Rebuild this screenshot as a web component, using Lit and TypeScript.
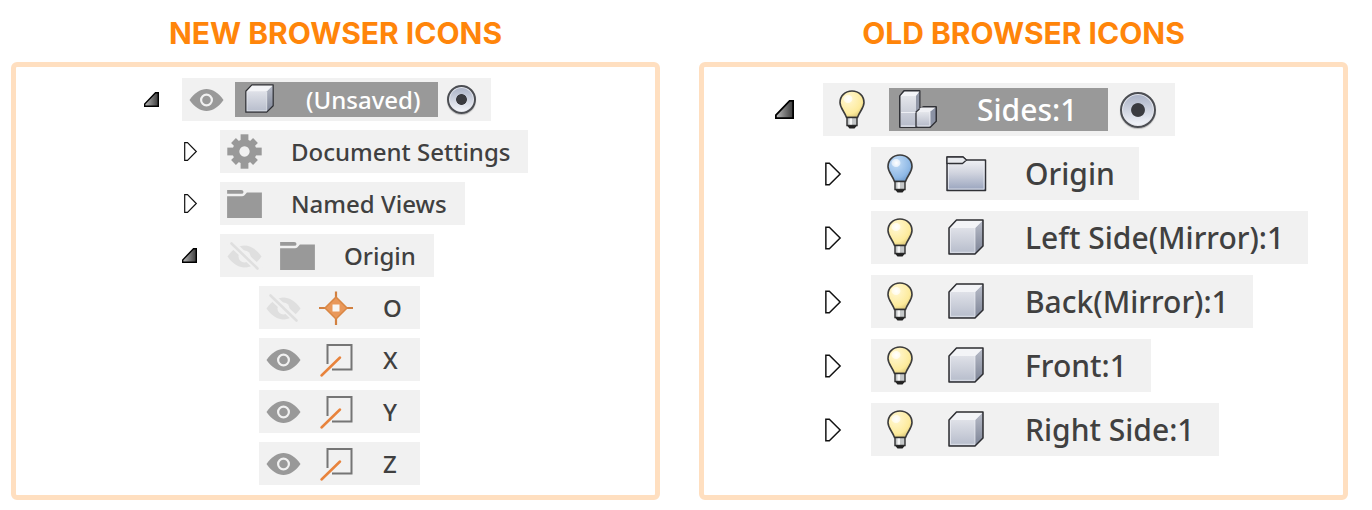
import { LitElement, html, svg, css, nothing, type TemplateResult } from "lit";
import { customElement, property } from "lit/decorators.js";
import { classMap } from "lit/directives/class-map.js";

type Shape = "cube" | "gear" | "folder" | "point" | "plane" | "parts" | "tabFolder";
type Lamp = "eye" | "eyeOff" | "bulbOn" | "bulbOff";

interface TreeNode {
  label: string;
  shape: Shape;
  lamp?: Lamp;
  open?: boolean;
  selected?: boolean;
  children?: TreeNode[];
  leaf?: boolean;
}

const gearTeeth = [0, 45, 90, 135, 180, 225, 270, 315];

const cube = svg`
  <linearGradient id="face" x1="0" y1="0" x2="0" y2="1"><stop offset="0" stop-color="#dfe1e8"/><stop offset="1" stop-color="#b6bccb"/></linearGradient>
  <linearGradient id="side" x1="0" y1="0" x2="0" y2="1"><stop offset="0" stop-color="#b9bdc9"/><stop offset="1" stop-color="#7d8496"/></linearGradient>
  <path d="M1 9 8.500 1H35V27L27 35H1Z" fill="#f3f4f7"/>
  <path d="M1 9H27V35H1Z" fill="url(#face)"/>
  <path d="M27 9 35 1V27L27 35Z" fill="url(#side)"/>
  <path d="M2.500 33.500V9.500M2.500 33.300H26.500M27 34V9L34 2" fill="none" stroke="#eef0f5" stroke-width="1" opacity=".7"/>
  <path d="M1 9 8.500 1H35V27L27 35H1Z" fill="none" stroke="#2c2d31" stroke-width="1.500" stroke-linejoin="round"/>`;

const shapes: Record<Shape, { box: string; art: TemplateResult<2> }> = {
  cube: { box: "0 0 36 36", art: cube },
  gear: {
    box: "0 0 36 36",
    art: svg`<g fill="#999">
      ${gearTeeth.map((a) => svg`<path d="${a % 90 ? "M14.500 2H21.500V10H14.500Z" : "M14 .300H22V10H14Z"}" transform="rotate(${a} 18 18)"/>`)}
      <path fill-rule="evenodd" d="M18 5.500a12.500 12.500 0 1 0 .01 0ZM18 12.700a5.300 5.300 0 1 1-.01 0Z"/></g>`,
  },
  folder: {
    box: "0 0 36 30",
    art: svg`<path fill="#999" d="M0 1H14.500Q17 1 17 3T14.500 5H0Z"/>
      <path fill="#999" d="M0 7.500H15.500Q17 7.500 18 6.500L20.500 3.500H36V30H0Z"/>`,
  },
  point: {
    box: "0 0 34 34",
    art: svg`<path d="M17 .500V34M0 17H34" stroke="#d18040" stroke-width="2.200"/>
      <path d="M17 6 28 17 17 28 6 17Z" fill="#e9985a" stroke="#d98745" stroke-width="1.500"/>
      <path d="M13.500 13.500H20.500V20.500H13.500Z" fill="#f8f6f4"/>`,
  },
  plane: {
    box: "0 0 34 34",
    art: svg`<path d="M8.500 21V2H32.500V26.500H13" fill="none" stroke="#757575" stroke-width="2"/>
      <path d="M2.500 32.500 21 14.500" stroke="#e8833c" stroke-width="2.500" stroke-linecap="round"/>`,
  },
  parts: {
    box: "0 0 38 38",
    art: svg`
      <linearGradient id="block" x1="0" y1="0" x2="0" y2="1"><stop offset="0" stop-color="#e4e6eb"/><stop offset="1" stop-color="#b5bac9"/></linearGradient>
      <path d="M1 6 5 1H20.500V19L25 17H37V31L31 37H1Z" fill="#c9cdd6" stroke="#303136" stroke-width="2" stroke-linejoin="round"/>
      <path d="M1.500 6 5.500 1.500H20.500L17 6Z" fill="#f4f5f8"/>
      <path d="M1.500 6H17V37H1.500Z" fill="url(#block)"/>
      <path d="M17 6 20.300 2V19L17 22Z" fill="#9298a8"/>
      <path d="M17 22 22 17.500H36.500L31 22Z" fill="#eff0f4"/>
      <path d="M17 22H31V36.500H17Z" fill="url(#block)"/>
      <path d="M31 22 36.500 17.500V31L31 36.500Z" fill="#8b92a4"/>
      <path d="M17 37V22L20.500 19" fill="none" stroke="#303136" stroke-width="1.300"/>
      <path d="M2 22.500H16.500M2 36H16M18.500 36H30.500M31 36V22" fill="none" stroke="#f5f6fa" stroke-width="1" opacity=".8"/>`,
  },
  tabFolder: {
    box: "0 0 41 36",
    art: svg`
      <linearGradient id="paper" x1="0" y1="0" x2="0" y2="1"><stop offset="0" stop-color="#f7f8fa"/><stop offset=".45" stop-color="#d3d6e0"/><stop offset="1" stop-color="#98a3bd"/></linearGradient>
      <path d="M1 1H17L20 4H39.500V34.500H1Z" fill="url(#paper)" stroke="#303136" stroke-width="1.500" stroke-linejoin="round"/>
      <path d="M1 7.500H16.500L20.500 4 17 1H1Z" fill="#e8eaee" stroke="#303136" stroke-width="1.300" stroke-linejoin="round"/>
      <path d="M2.500 8V33H38V5.500" fill="none" stroke="#eef1f7" stroke-width="1" opacity=".7"/>`,
  },
};

const bulb = (id: string, rim: string, glow: string, edge: string) => svg`
  <radialGradient id=${id} cx=".35" cy=".3" r=".75"><stop offset="0" stop-color="#fff"/><stop offset=".22" stop-color="${glow}"/><stop offset=".75" stop-color="${rim}"/><stop offset="1" stop-color="${edge}"/></radialGradient>
  <path d="M13 1C6 1 1 6 1 12.500 1 18 5 20.500 7.500 27.500H18.500C21 20.500 25 18 25 12.500 25 6 20 1 13 1Z" fill="url(#${id})" stroke="#3c3c3c" stroke-width="1.600"/>
  <ellipse cx="9" cy="9" rx="4.500" ry="4" fill="#fff" opacity=".6"/>
  <path d="M8 27.500H18V35.500H8Z" fill="#c4c7c8" stroke="#303030" stroke-width="1.400"/>
  <path d="M10.500 28.500H13V34.500H10.500Z" fill="#f5f5f5"/>
  <path d="M8 35.500H18L15.500 38.500H10.500Z" fill="#222"/>`;

const lamps: Record<Lamp, { box: string; art: TemplateResult<2>; title: string }> = {
  eye: {
    box: "0 0 35 28",
    title: "Hide",
    art: svg`<path d="M.500 14C6 6.500 11.500 3 17.500 3S29 6.500 34.500 14C29 21.500 23.500 25 17.500 25S6 21.500.500 14Z" fill="#999"/>
      <circle cx="17.500" cy="14" r="5.400" fill="none" stroke="#f1f1f1" stroke-width="2.200"/>`,
  },
  eyeOff: {
    box: "0 0 35 28",
    title: "Show",
    art: svg`<path d="M.500 14.500C6 7 11.500 3.500 17.500 3.500S29 7 34.500 14.500C29 22 23.500 25.500 17.500 25.500S6 22 .500 14.500Z" fill="#dfdfdf"/>
      <circle cx="17.500" cy="14.500" r="6" fill="#f1f1f1"/>
      <path d="M3 0 33 28" stroke="#f1f1f1" stroke-width="7"/>
      <path d="M4.500 1.500 30.500 26.500" stroke="#dfdfdf" stroke-width="2.600" stroke-linecap="round"/>`,
  },
  bulbOn: { box: "0 0 26 40", title: "Hide", art: bulb("warm", "#fdeb9c", "#fff4c4", "#dcc878") },
  bulbOff: { box: "0 0 26 40", title: "Show", art: bulb("cool", "#8fb9e6", "#b5d3f2", "#6f9acb") },
};

const openMark = svg`
  <linearGradient id="shade" x1="0" y1="0" x2="1" y2="0"><stop offset="0" stop-color="#bbb"/><stop offset="1" stop-color="#3a3a3a"/></linearGradient>
  <path d="M.700 14.300V12L11.500.700H14.300V14.300Z" fill="url(#shade)" stroke="#000" stroke-width="1.400"/>`;
const closedMark = svg`<path d="M.700.700H3.500L12.300 9.500 3.500 18.300H.700Z" fill="#fff" stroke="#111" stroke-width="1.200"/>`;

@customElement("browser-tree")
class BrowserTree extends LitElement {
  @property({ attribute: false }) nodes: TreeNode[] = [];
  @property({ type: Boolean, reflect: true }) large = false;

  static styles = css`
    :host {
      --row: 43px;
      --gap: 9px;
      --step: 38px;
      --start: 128px;
      --top: 11px;
      --slot: 48px;
      --inset: 5px;
      --space: 23px;
      --end: 18px;
      --pick-end: 18px;
      --text: 24px;
      --pick: 35px;
      --radio: 29px;
      --radio-left: 9px;
      --radio-right: 15px;
      display: block;
      color: #404040;
      font: 500 var(--text) / 32px "Noto Sans", sans-serif;
    }
    :host([large]) {
      --row: 53px;
      --gap: 11px;
      --step: 48px;
      --start: 71px;
      --top: 16px;
      --slot: 58px;
      --inset: 8px;
      --space: 30px;
      --end: 24px;
      --pick-end: 31px;
      --text: 30px;
      --pick: 43px;
      --radio: 36px;
      --radio-left: 12px;
      --radio-right: 19px;
    }
    ul { list-style: none; margin: 0; padding: 0 0 0 var(--step); display: grid; gap: var(--gap); }
    ul.root { padding: var(--top) 0 10px var(--start); }
    ul.leaves { padding-left: calc(var(--step) * 2 + 1px); }
    li { display: grid; gap: var(--gap); }
    .row { display: flex; align-items: center; }
    button { appearance: none; border: 0; margin: 0; padding: 0; background: none; cursor: pointer; }
    .toggle { width: var(--step); flex: none; display: flex; align-items: center; }
    .chip { display: flex; align-items: center; height: var(--row); background: #f1f1f1; }
    .lamp { width: var(--slot); margin-right: var(--inset); display: flex; justify-content: center; }
    .name { display: flex; align-items: center; height: var(--pick); padding-right: var(--end); white-space: nowrap; }
    .name.selected { background: #999; color: #fff; padding-right: var(--pick-end); }
    .shape { width: var(--slot); margin-right: var(--space); display: flex; justify-content: center; }
    .leaf { min-width: 19px; }
    svg { display: block; overflow: visible; }
    .mark-open { width: 15px; height: 15px; }
    .mark-closed { width: 13px; height: 19px; margin-left: 2px; }
    .eye, .eyeOff { width: 35px; height: 28px; }
    .bulbOn, .bulbOff { width: 26px; height: 40px; }
    .cube { width: 29px; height: 29px; }
    .parts { width: 38px; height: 38px; }
    .cube, .parts { margin-bottom: 2px; }
    .gear { width: 35px; height: 35px; }
    .folder { width: 35px; height: 29px; }
    .point, .plane { width: 34px; height: 34px; }
    .tabFolder { width: 41px; height: 36px; }
    :host([large]) .mark-open { width: 19px; height: 19px; }
    :host([large]) .mark-closed { width: 16px; height: 24px; }
    :host([large]) .cube { width: 36px; height: 36px; }
    input {
      appearance: none;
      box-sizing: border-box;
      width: var(--radio);
      height: var(--radio);
      margin: 0 var(--radio-right) 0 var(--radio-left);
      border: 2px solid #4c4e53;
      border-radius: 50%;
      background:
        radial-gradient(circle closest-side, #3a3b40 0 40%, transparent 46%),
        linear-gradient(#a9b1c5, #f4f6fb);
      box-shadow: inset 0 0 0 1px #e6e8ee, 0 1px 1px #bbb;
    }
  `;

  private item(n: TreeNode): TemplateResult {
    const s = shapes[n.shape];
    const l = n.lamp ? lamps[n.lamp] : undefined;
    return html`<li>
      <div class="row">
        ${n.leaf
          ? nothing
          : html`<button class="toggle" aria-expanded=${n.open ? "true" : "false"} aria-label=${n.label}>
              ${n.open
                ? html`<svg class="mark-open" viewBox="0 0 15 15">${openMark}</svg>`
                : html`<svg class="mark-closed" viewBox="0 0 13 19">${closedMark}</svg>`}
            </button>`}
        <div class="chip">
          ${l
            ? html`<button class="lamp" aria-label="${l.title} ${n.label}"><svg class=${n.lamp!} viewBox=${l.box}>${l.art}</svg></button>`
            : nothing}
          <div class=${classMap({ name: true, selected: !!n.selected })}>
            <span class="shape"><svg class=${n.shape} viewBox=${s.box}>${s.art}</svg></span>
            <span class=${classMap({ leaf: !!n.leaf })}>${n.label}</span>
          </div>
          ${n.selected ? html`<input type="radio" name="active" checked aria-label="Activate ${n.label}" />` : nothing}
        </div>
      </div>
      ${n.children ? html`<ul class=${classMap({ leaves: !!n.children[0].leaf })}>${n.children.map((c) => this.item(c))}</ul>` : nothing}
    </li>`;
  }

  render() {
    return html`<ul class="root">${this.nodes.map((n) => this.item(n))}</ul>`;
  }
}

const modern: TreeNode[] = [
  {
    label: "(Unsaved)", shape: "cube", lamp: "eye", open: true, selected: true,
    children: [
      { label: "Document Settings", shape: "gear" },
      { label: "Named Views", shape: "folder" },
      {
        label: "Origin", shape: "folder", lamp: "eyeOff", open: true,
        children: [
          { label: "O", shape: "point", lamp: "eyeOff", leaf: true },
          { label: "X", shape: "plane", lamp: "eye", leaf: true },
          { label: "Y", shape: "plane", lamp: "eye", leaf: true },
          { label: "Z", shape: "plane", lamp: "eye", leaf: true },
        ],
      },
    ],
  },
];

const classic: TreeNode[] = [
  {
    label: "Sides:1", shape: "parts", lamp: "bulbOn", open: true, selected: true,
    children: [
      { label: "Origin", shape: "tabFolder", lamp: "bulbOff" },
      { label: "Left Side(Mirror):1", shape: "cube", lamp: "bulbOn" },
      { label: "Back(Mirror):1", shape: "cube", lamp: "bulbOn" },
      { label: "Front:1", shape: "cube", lamp: "bulbOn" },
      { label: "Right Side:1", shape: "cube", lamp: "bulbOn" },
    ],
  },
];

@customElement("app-root")
class AppRoot extends LitElement {
  static styles = css`
    :host { display: block; background: #fff; }
    main { display: grid; grid-template-columns: 1fr 1fr; gap: 39px; padding: 14px 24px 10px 11px; }
    section { display: flex; flex-direction: column; gap: 10px; min-width: 0; }
    h2 { margin: 0; color: #ff850a; font: 700 30px / 38px Inter, sans-serif; text-align: center; }
    .panel { flex: 1; border: 5px solid #ffdfc0; border-radius: 6px; }
  `;

  render() {
    return html`<main>
      <section>
        <h2>NEW BROWSER ICONS</h2>
        <div class="panel"><browser-tree .nodes=${modern}></browser-tree></div>
      </section>
      <section>
        <h2>OLD BROWSER ICONS</h2>
        <div class="panel"><browser-tree large .nodes=${classic}></browser-tree></div>
      </section>
    </main>`;
  }
}
